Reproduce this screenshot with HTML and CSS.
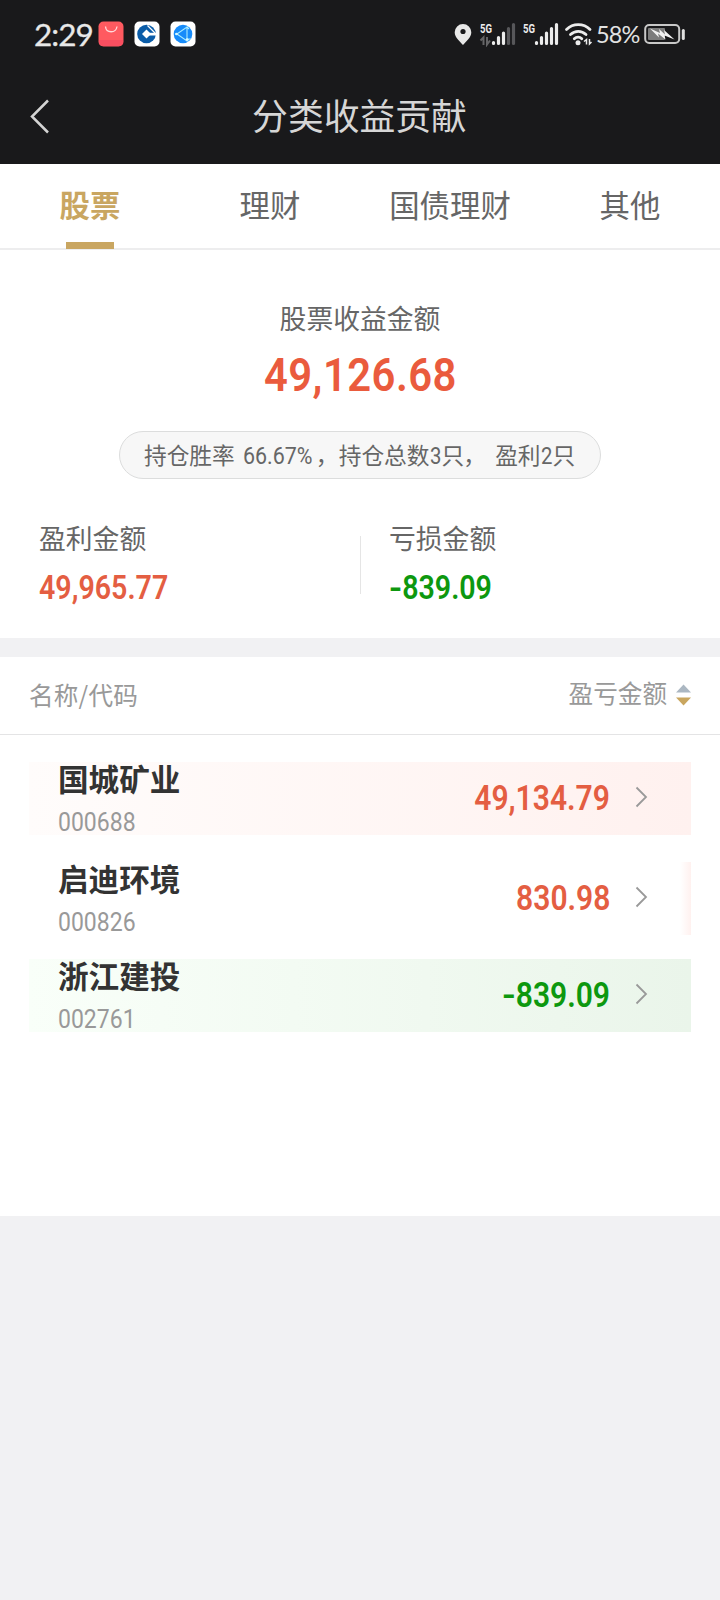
FILE: index.html
```html
<!DOCTYPE html>
<html lang="zh-CN">
<head>
<meta charset="utf-8">
<title>分类收益贡献</title>
<link rel="stylesheet" href="styles.css">
</head>
<body>
<header class="top">
  <div class="status">
    <span class="clock">2:29</span>
    <div class="apps">
      <svg width="26" height="26" viewBox="0 0 26 26"><rect x=".5" y=".5" width="25" height="25" rx="5" fill="#ff5a60"/><path d="M1 19h24v2a4 4 0 0 1-4 4H5a4 4 0 0 1-4-4z" fill="#f94e60"/><path d="M7.500 5.500c.6 7 10.500 7 11.500 0" fill="none" stroke="#ffd9d9" stroke-width="1.300"/></svg>
      <svg width="26" height="26" viewBox="0 0 26 26"><rect x=".5" y=".5" width="25" height="25" rx="5" fill="#fff"/><circle cx="12.500" cy="13" r="9.300" fill="#0a5ca8"/><path d="M12.500 8.500 17 13l-4.500 4.500L8 13z" fill="#fff"/><path d="M15 11.800h8v2.700h-8z" fill="#fff"/><path d="M13.500 4.500 21 12" stroke="#fff" stroke-width="1.200"/></svg>
      <svg width="26" height="26" viewBox="0 0 26 26"><rect x=".5" y=".5" width="25" height="25" rx="5" fill="#fff"/><circle cx="13" cy="13" r="9.300" fill="#168bfa"/><path d="M5 13h2l10-7v14L7 13M17 6l2 2M17 20l2-2M17 18h4" fill="none" stroke="#a8ecff" stroke-width="1.100"/><circle cx="6.500" cy="13" r="1.300" fill="#d8f8ff"/><circle cx="17" cy="18.500" r="1.300" fill="#d8f8ff"/></svg>
    </div>
    <svg class="signals" width="142" height="26" viewBox="452 21 142 26">
      <path d="M463 24a8.300 8.300 0 0 0-8.300 8.300c0 5.500 5.300 9.200 8.300 12.700 3-3.500 8.300-7.200 8.300-12.700A8.300 8.300 0 0 0 463 24z" fill="#e8e8e8"/><circle cx="463" cy="31.500" r="2.600" fill="#19191b"/>
      <text class="net" x="480" y="32.500" textLength="12" lengthAdjust="spacingAndGlyphs">5G</text>
      <text class="net" x="523" y="32.500" textLength="12" lengthAdjust="spacingAndGlyphs">5G</text>
      <path d="M480.500 40.500l3-3v7.500M487 37v7.500l3-4" fill="none" stroke="#656567" stroke-width="2"/>
      <g stroke="#ececec" stroke-width="3.200" stroke-linecap="round">
        <path d="M493.500 42.500v1M498.500 37.500v6M503.500 33v10.500"/>
        <path d="M508.500 28.500v15M513.500 24.500v19" stroke="#57575a"/>
        <path d="M536.500 42.500v1M541.500 37.500v6M546.500 33v10.500M551.500 28.500v15M556.500 24.500v19"/>
      </g>
      <g fill="none" stroke="#ececec" stroke-width="2.800" stroke-linecap="round"><path d="M566.500 29.500c6.500-6.500 17-6.500 23.500 0M570.500 34.500c4.500-4.300 11-4.300 15.500 0M574.300 38.800c2.300-2.300 5.300-2.300 7.500 0"/></g>
      <circle cx="578" cy="42.800" r="2.500" fill="#ececec"/><path d="M584 41.500l2.500-2v5M589.500 39v5l2-2" fill="none" stroke="#ececec" stroke-width="1.500"/>
    </svg>
    <span class="charge">58%</span>
    <svg class="battery" width="42" height="22" viewBox="0 0 42 22"><rect x="1.200" y="2" width="34" height="18" rx="4" fill="none" stroke="#c8c8c8" stroke-width="2"/><rect x="4" y="5" width="17" height="12" rx="1" fill="#7c7c7c"/><path d="M6 5.500l10 4.500-1-4 6 5.500-1-4.500 10.500 9.500-10-4 1 4-7.500-6 1 4z" fill="#f2f2f2"/><path d="M39.300 7.500v8" stroke="#e0e0e0" stroke-width="3" stroke-linecap="round"/></svg>
  </div>
  <div class="titlebar">
    <svg class="back" width="22" height="36" viewBox="0 0 22 36"><path d="M19 2.500 3 18.500l16 16" fill="none" stroke="#d4d4d4" stroke-width="2.500"/></svg>
    <h1>分类收益贡献</h1>
  </div>
</header>
<nav class="tabs">
  <a class="tab active">股票</a><a class="tab">理财</a><a class="tab">国债理财</a><a class="tab">其他</a>
</nav>
<section class="summary">
  <div class="label">股票收益金额</div>
  <div class="total"><span class="num">49,126.68</span></div>
  <div class="pill"><span>持仓胜率</span><b class="rate">66.67%</b><span class="c1">，</span><span>持仓总数</span><b class="one">3</b><span>只</span><span class="c2">，</span><span>盈利</span><b class="one">2</b><span>只</span></div>
  <div class="split">
    <div class="cell"><div class="label">盈利金额</div><div class="amount up"><span class="num">49,965.77</span></div></div>
    <div class="cell right"><div class="label">亏损金额</div><div class="amount down"><span class="num"><i class="minus">-</i>839.09</span></div></div>
  </div>
</section>
<section class="list">
  <div class="head"><span class="col">名称/代码</span><span class="sort">盈亏金额<svg width="15" height="22" viewBox="0 0 15 22"><path d="M7.500.5 15 8.500H0z" fill="#abb7c2"/><path d="M0 13.500h15l-7.500 8z" fill="#c9a65f"/></svg></span></div>
  <div class="row gain">
    <div class="stock"><div class="name">国城矿业</div><div class="code"><span class="num">000688</span></div></div>
    <div class="value up"><span class="num">49,134.79</span></div>
    <svg class="go" width="13" height="22" viewBox="0 0 13 22"><path d="M1.500 1.500 11 11l-9.500 9.500" fill="none" stroke="#999" stroke-width="1.800"/></svg>
  </div>
  <div class="row slight">
    <div class="stock"><div class="name">启迪环境</div><div class="code"><span class="num">000826</span></div></div>
    <div class="value up"><span class="num">830.98</span></div>
    <svg class="go" width="13" height="22" viewBox="0 0 13 22"><path d="M1.500 1.500 11 11l-9.500 9.500" fill="none" stroke="#999" stroke-width="1.800"/></svg>
  </div>
  <div class="row loss">
    <div class="stock"><div class="name">浙江建投</div><div class="code"><span class="num">002761</span></div></div>
    <div class="value down"><span class="num"><i class="minus">-</i>839.09</span></div>
    <svg class="go" width="13" height="22" viewBox="0 0 13 22"><path d="M1.500 1.500 11 11l-9.500 9.500" fill="none" stroke="#999" stroke-width="1.800"/></svg>
  </div>
</section>
</body>
</html>
```
FILE: styles.css
```css
* { box-sizing: border-box; }
body { margin: 0; width: 720px; height: 1600px; overflow: hidden; background: #f1f1f3; color: #666; font-family: "Noto Sans CJK SC", sans-serif; }
svg { display: block; flex: none; }
.top { height: 164px; background: #19191b; }
.status { height: 70px; display: flex; align-items: center; padding-left: 34px; padding-bottom: 2px; }
.clock { width: 64px; font: 400 31.5px/68px Lato, sans-serif; color: #e8e8e8; white-space: nowrap; letter-spacing: -1px; -webkit-text-stroke: .3px; }
.apps { display: flex; gap: 10px; width: 98px; }
.signals { margin-left: 256px; }
.net { font: 700 12.5px Roboto, sans-serif; fill: #ececec; }
.charge { width: 46px; margin-left: 2px; font: 400 23.5px/68px Lato, sans-serif; color: #e2e2e2; letter-spacing: -.9px; }
.battery { margin-left: 2px; }
.titlebar { height: 94px; display: flex; align-items: center; padding: 0 52px 0 29px; }
.back { margin-top: -3px; }
.titlebar h1 { flex: 1; height: 94px; margin: 0; text-align: center; font-size: 35.8px; font-weight: 400; line-height: 88px; color: #d6d6d6; }
.tabs { height: 86px; display: grid; grid-template-columns: repeat(4, 1fr); background: #fff; border-bottom: 2px solid #ededee; }
.tab { display: flex; flex-direction: column; align-items: center; font-size: 30.4px; line-height: 80px; height: 84px; }
.active { color: #c9a661; font-weight: 700; }
.active::after { content: ""; width: 48px; height: 7px; margin-top: -2px; background: #c9a661; flex: none; }
.summary { height: 388px; background: #fff; padding-top: 49px; }
.label { font-size: 26.8px; line-height: 38px; }
.summary > .label { text-align: center; }
.num { display: inline-block; font-family: Roboto, sans-serif; white-space: nowrap; }
.total { height: 68px; margin-top: 2px; text-align: center; color: #ea5b3d; font-size: 47px; line-height: 63px; font-weight: 600; }
.total .num { transform: scaleX(.89); letter-spacing: .5px; }
.pill { width: 482px; height: 48px; margin: 24px auto 0; border: 1px solid #dcdddd; border-radius: 25px; background: #f7f7f7; display: flex; padding-left: 24px; font-size: 22.7px; line-height: 45px; white-space: nowrap; }
.pill b { font: 450 24.500px/47px Roboto, sans-serif; transform-origin: 0 50%; }
.rate { width: 75px; margin-left: 8px; transform: scaleX(.875); }
.c1 { width: 21px; text-indent: -2px; }
.one { width: 12px; transform: scaleX(.83); }
.c2 { width: 31px; text-indent: -1px; }
.split { display: grid; grid-template-columns: 361px 1fr; margin-top: 40px; }
.cell { padding-left: 39px; height: 90px; }
.cell.right { padding-left: 28px; }
.cell:first-child { background: linear-gradient(#e5e5e5, #e5e5e5) 360px 17px / 1px 58px no-repeat; }
.amount { font-size: 32.5px; line-height: 38px; margin-top: 9px; font-weight: 600; }
.amount .num { transform: scaleX(.88); transform-origin: 0 50%; }
.minus { display: inline-block; font-style: normal; transform: scaleX(1.25); transform-origin: 0 50%; margin-right: 3px; }
.up { color: #e45e42; }
.down { color: #0d980f; }
.list { margin-top: 19px; height: 559px; background: #fff; }
.head { height: 78px; display: flex; justify-content: space-between; padding: 0 29px; border-bottom: 1px solid #e4e4e5; color: #999; font-size: 24.6px; line-height: 75px; font-weight: 400; }
.col { letter-spacing: .2px; }
.sort { display: flex; gap: 9px; line-height: 71px; }
.sort svg { margin-top: 27px; }
.row { height: 73px; margin: 0 29px; padding-left: 29px; display: flex; align-items: flex-start; }
.gain { margin-top: 27px; background: linear-gradient(90deg, #fffcfb, #fff1ef); }
.slight { margin-top: 27px; background: linear-gradient(90deg, #fff, #fff1ef) right / 11px 100% no-repeat; }
.loss { margin-top: 24px; background: linear-gradient(90deg, #f9fff9, #eaf5ea); }
.stock { width: 160px; }
.name { height: 36px; font-size: 30.6px; line-height: 32px; font-weight: 700; color: #333; }
.code { font-size: 25px; line-height: 34px; margin-top: 5px; color: #999; }
.code .num { transform: scaleX(.92); transform-origin: 0 50%; }
.value { flex: 1; text-align: right; font-size: 34.5px; line-height: 67px; font-weight: 600; }
.value .num { transform: scaleX(.87); transform-origin: 100% 50%; margin-right: -1px; }
.go { margin: 24px 43px 0 26px; }
```
